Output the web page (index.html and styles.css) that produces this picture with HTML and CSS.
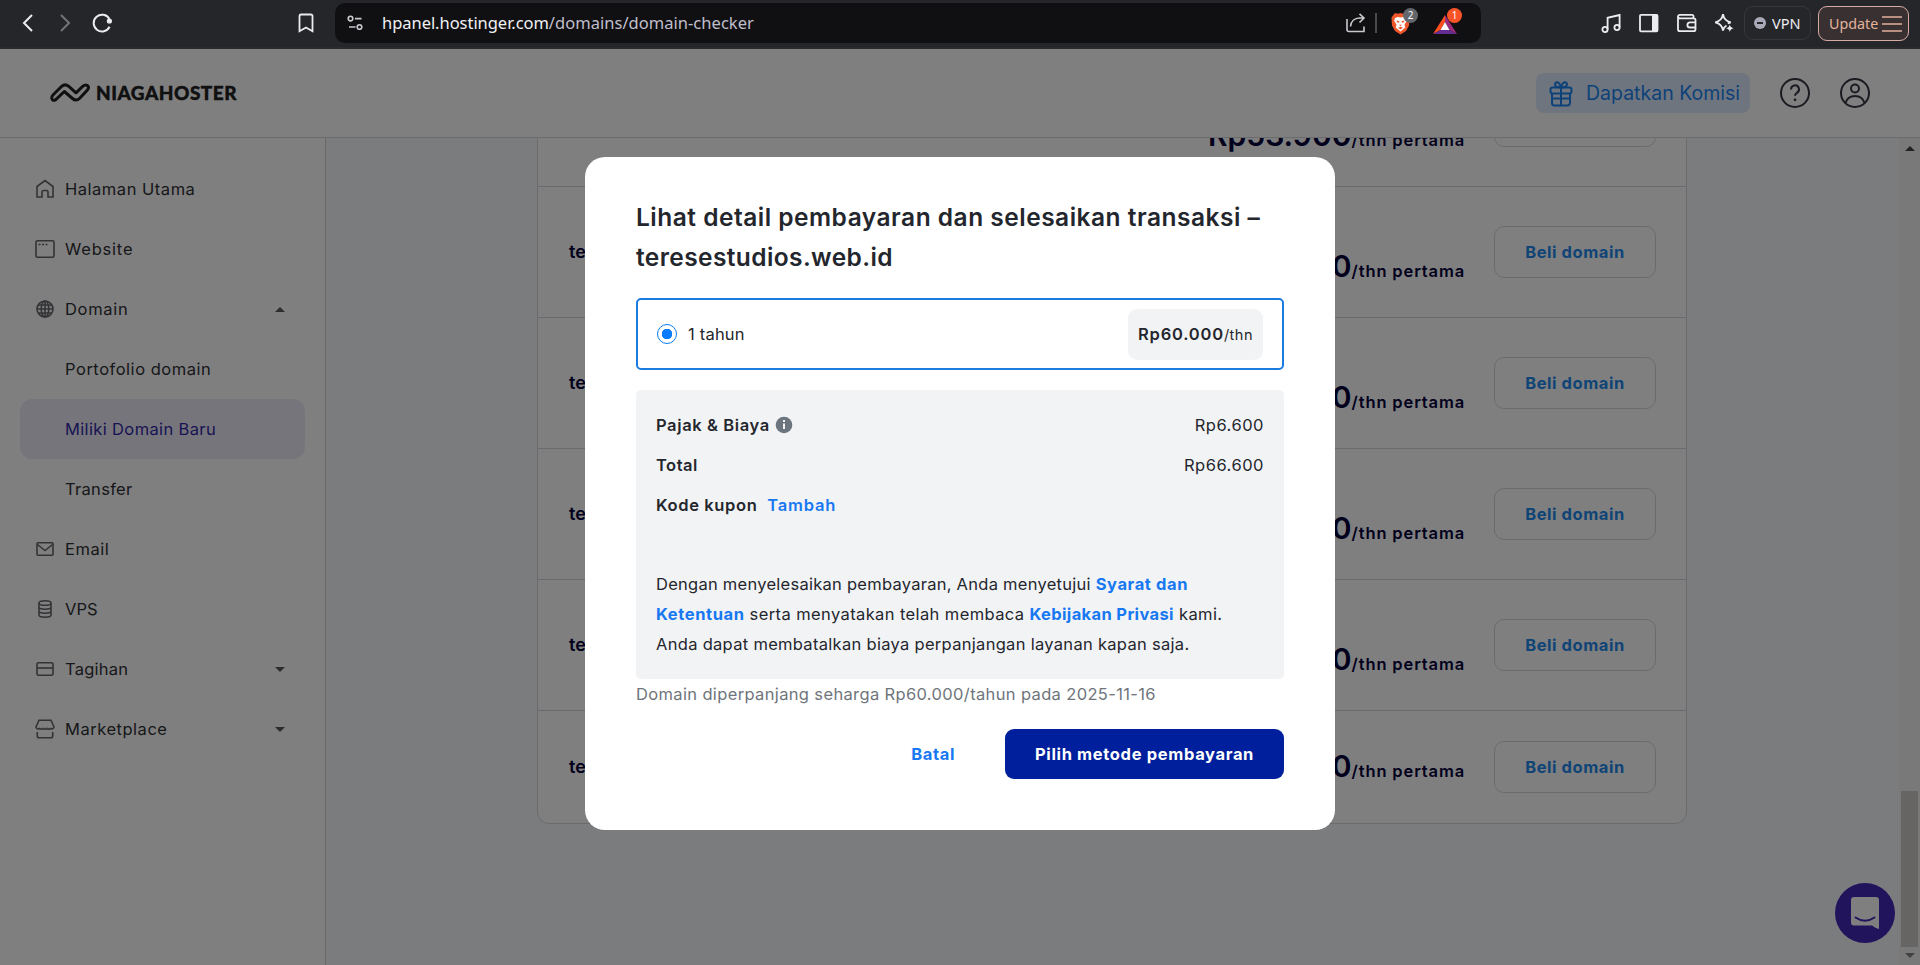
FILE: index.html
```html
<!DOCTYPE html>
<html lang="id">
<head>
<meta charset="utf-8">
<title>Niagahoster - Domain checker</title>
<link rel="stylesheet" href="styles.css">
</head>
<body>
<div class="toolbar">
  <svg class="tb-back" width="20" height="24" viewBox="0 0 20 24"><path d="M14 4 6 12l8 8"/></svg>
  <svg class="tb-forward" width="20" height="24" viewBox="0 0 20 24"><path d="m6 4 8 8-8 8"/></svg>
  <svg class="tb-reload" width="24" height="24" viewBox="0 0 24 24"><path d="M19.6 15.8A8.4 8.4 0 1 1 19.4 8"/><circle class="solid" cx="19.4" cy="10" r="2.6"/></svg>
  <svg class="tb-bookmark" width="18" height="24" viewBox="0 0 18 24"><path d="M2.5 20.300V5a1.500 1.500 0 0 1 1.500-1.500h10A1.500 1.500 0 0 1 15.500 5v15.300L9 16.500z"/></svg>
  <div class="address">
    <svg class="tb-tune" width="18" height="18" viewBox="0 0 18 18"><circle cx="4.500" cy="4.600" r="2.300"/><path d="M9 4.600h6.500M3 13h6.500"/><circle cx="13.500" cy="13" r="2.300"/></svg>
    <div class="url"><span class="url-host">hpanel.hostinger.com</span><span class="url-path">/domains/domain-checker</span></div>
    <svg class="tb-share" width="22" height="22" viewBox="0 0 22 22"><path d="M2 7v10.500a2 2 0 0 0 2 2h15v-5M5.500 14.500c.5-5 4-8.500 9-8.500h4.500M14.500 1.800 19 6l-4.500 4.500"/></svg>
    <span class="divider"></span>
    <div class="shield">
      <svg width="21" height="23" viewBox="0 0 21 23"><path fill="#f1562b" d="m5 1 3 .8L10.500 1l2.500.8L16 1l2 2.500 1.500 2-.5 8-3 5.500-5.500 3.500L5 19l-3-5.500-.5-8 1.500-2z"/><path fill="#fff" d="m5 6 3-1 2.500.6L13 5l3 1 .8 3-2.300 3.500.8 3-4.800 4-4.800-4 .8-3L4.200 9z"/><path fill="#f1562b" d="m6.500 8.500 3 .8-.5 1.500-2-.5zM14.500 8.500l-3 .8.5 1.500 2-.5zM9 12.800h3l-1.500 1.400zM8 15.800l2.500-1 2.500 1-2.500 1.700z"/></svg>
      <span class="badge badge-gray">2</span>
    </div>
    <div class="rewards">
      <svg width="24" height="20" viewBox="0 0 24 20"><path fill="#ff4f1f" d="M12 0v7L7.500 15 0 19z"/><path fill="#9e2a7c" d="M12 0v7l4.500 8 7.500 4z"/><path fill="#662d91" d="M0 19l7.500-4h9l7.500 4z"/><path fill="#fff" d="m12 7 4.500 8h-9z"/></svg>
      <span class="badge badge-orange">1</span>
    </div>
  </div>
  <svg class="tb-music" width="22" height="22" viewBox="0 0 22 22"><circle cx="5" cy="17.500" r="2.600"/><circle cx="17" cy="15.500" r="2.600"/><path d="M7.600 17.500V5.800l12-2.800v12.500"/></svg>
  <svg class="tb-panel" width="22" height="22" viewBox="0 0 22 22"><rect x="2" y="2.800" width="17.500" height="16.500" rx="1"/><path class="solid" d="M14 2.800h5.500v16.500H14z"/></svg>
  <svg class="tb-wallet" width="22" height="22" viewBox="0 0 22 22"><path d="M17.500 6.300V4A1.500 1.500 0 0 0 16 2.800H4A2 2 0 0 0 2 4.500v12.700a2 2 0 0 0 2 2h13.500a2 2 0 0 0 2-2V8a1.700 1.700 0 0 0-1.700-1.700H4a2 2 0 0 1-2-1.800M19.500 10.300H14a2.600 2.600 0 0 0 0 5.200h5.500"/></svg>
  <svg class="tb-spark" width="22" height="22" viewBox="0 0 22 22"><path d="M13.500 13.500C11.500 14.500 10.500 16 10 18.500c-.8-5-2.800-7.200-7.800-8.200 5-1 7-3.300 7.800-8.200.8 4.900 2.800 7.200 7.800 8.200-1.200.3-2.200.7-3 1.200"/><path class="solid" d="M16.800 12.500q.6 3.200 3.800 3.800-3.200.6-3.800 3.800-.6-3.200-3.800-3.800 3.200-.6 3.800-3.800z"/></svg>
  <div class="vpn"><svg width="12" height="12" viewBox="0 0 12 12"><circle cx="6" cy="6" r="6" fill="#a9a9b8"/><path d="M3 6h6" stroke="#25262a" stroke-width="2"/></svg><span>VPN</span></div>
  <div class="update"><span>Update</span><svg width="20" height="18" viewBox="0 0 20 18"><path d="M0 2h20M0 9h20M0 16h20"/></svg></div>
</div>

<div class="page">
  <header class="header">
    <svg class="logo-mark" width="40" height="20" viewBox="0 0 40 20"><path d="M5.500 16.800Q2.500 18.300 1.800 15.500 1.500 13.500 3.200 11.800L11.500 3.500Q15 .500 18.500 3.200L26 9.800l6.500-6.300q3.500-2.800 5.500-.5 1.300 2-.8 4.300l-7.500 7.900q-3.500 3.500-7.200.3L14.300 8.500z"/></svg>
    <span class="logo-name">NIAGAHOSTER</span>
    <div class="commission">
      <svg width="24" height="27" viewBox="0 0 24 27"><rect x="1.500" y="7.500" width="21" height="6" rx="2"/><path d="M3 13.500V23a2.500 2.500 0 0 0 2.500 2.500h13A2.500 2.500 0 0 0 21 23v-9.500M12 7.500v18M3 18.500h18M12 7.500C8 7.500 6 6 6 4s4-4 6 3.500C14 0 18 2 18 4s-2 3.500-6 3.500z"/></svg>
      <span>Dapatkan Komisi</span>
    </div>
    <svg class="round-icon help" width="32" height="32" viewBox="0 0 32 32"><circle cx="16" cy="16" r="14"/><path d="M12 12.500a4 4 0 1 1 6 3.300c-1.500.9-2 1.400-2 3"/><circle class="dot" cx="16" cy="22.800" r="1.400"/></svg>
    <svg class="round-icon" width="32" height="32" viewBox="0 0 32 32"><circle cx="16" cy="16" r="14"/><circle cx="16" cy="11.500" r="4"/><path d="M6.500 26c1.500-5 5-7 9.500-7s8 2 9.500 7"/></svg>
  </header>

  <div class="body">
    <nav class="sidebar">
      <a class="item"><svg width="20" height="20" viewBox="0 0 20 20"><path d="M2 7.500 10 1.500l8 6V18h-5v-5q0-1.500-1.500-1.500h-3Q7 11.500 7 13v5H2z"/></svg><span class="w-home">Halaman Utama</span></a>
      <a class="item"><svg width="20" height="20" viewBox="0 0 20 20"><rect x="1" y="1.800" width="18" height="16.400" rx="1.500"/><path d="M3.500 5.500h2M7 5.500h2M10.500 5.500h2"/></svg><span class="w-website">Website</span></a>
      <a class="item"><svg width="20" height="20" viewBox="0 0 20 20"><circle cx="10" cy="10" r="8"/><ellipse cx="10" cy="10" rx="3.800" ry="8"/><path d="M10 2v16M2 10h16M3 6h14M3 14h14"/></svg><span class="w-domain">Domain</span><i class="caret up"></i></a>
      <a class="item sub"><span class="w-portfolio">Portofolio domain</span></a>
      <a class="item sub active"><span class="w-new">Miliki Domain Baru</span></a>
      <a class="item sub"><span class="w-transfer">Transfer</span></a>
      <a class="item"><svg width="20" height="20" viewBox="0 0 20 20"><rect x="2" y="3.800" width="16" height="12.500" rx="1"/><path d="m2.500 5.500 7.500 6 7.500-6"/></svg><span class="w-email">Email</span></a>
      <a class="item"><svg width="20" height="20" viewBox="0 0 20 20"><ellipse cx="10" cy="4" rx="6" ry="2.300"/><path d="M4 4v12c0 3 12 3 12 0V4M4 8c0 3 12 3 12 0M4 12c0 3 12 3 12 0"/></svg><span class="w-vps">VPS</span></a>
      <a class="item"><svg width="20" height="20" viewBox="0 0 20 20"><rect x="2" y="3.800" width="16" height="12.500" rx="1.500"/><path d="M2 9h16"/></svg><span class="w-billing">Tagihan</span><i class="caret"></i></a>
      <a class="item"><svg width="20" height="20" viewBox="0 0 20 20"><path d="M4 1.200h12L19 8q-1 3-3.500 1.500-1.300 1.500-2.700 0-1.400 1.500-2.800 0-1.400 1.500-2.800 0-1.400 1.500-2.700 0Q2 11 1 8zM2.300 13v4q0 1.800 1.800 1.800h11.800q1.800 0 1.800-1.800v-4"/></svg><span class="w-market">Marketplace</span><i class="caret"></i></a>
    </nav>
    <main class="content">
      <div class="results">
        <div class="result"><span class="name">teresestudios</span><span class="price"><b>Rp53.900</b>/thn pertama</span><button class="buy">Beli domain</button></div>
        <div class="result"><span class="name">teresestudios</span><span class="price"><b>Rp53.900</b>/thn pertama</span><button class="buy">Beli domain</button></div>
        <div class="result"><span class="name">teresestudios</span><span class="price"><b>Rp53.900</b>/thn pertama</span><button class="buy">Beli domain</button></div>
        <div class="result"><span class="name">teresestudios</span><span class="price"><b>Rp53.900</b>/thn pertama</span><button class="buy">Beli domain</button></div>
        <div class="result"><span class="name">teresestudios</span><span class="price"><b>Rp53.900</b>/thn pertama</span><button class="buy">Beli domain</button></div>
        <div class="result short"><span class="name">teresestudios</span><span class="price"><b>Rp53.900</b>/thn pertama</span><button class="buy">Beli domain</button></div>
      </div>
    </main>
    <div class="scrollbar"><i class="sb-arrow sb-up"></i><i class="sb-thumb"></i><i class="sb-arrow sb-down"></i></div>
  </div>

  <div class="chat"><svg width="30" height="34" viewBox="0 0 30 34"><path fill="#fff" d="M3 1h23a3 3 0 0 1 3 3v29q-4-1-7-3.500H4a3 3 0 0 1-3-3V4a3 3 0 0 1 3-3z"/><path d="M5.500 21.500q9.500 6.500 19 0" fill="none" stroke="#4526ba" stroke-width="2" stroke-linecap="round"/></svg></div>

  <div class="overlay">
    <section class="modal">
      <h2 class="title"><span>Lihat detail pembayaran dan selesaikan transaksi –</span><br><span class="title-domain">teresestudios.web.id</span></h2>
      <div class="option">
        <span class="radio"></span><span class="period">1 tahun</span>
        <span class="chip"><b>Rp60.000</b><small>/thn</small></span>
      </div>
      <div class="summary">
        <div class="line"><b class="w-tax">Pajak &amp; Biaya</b><svg width="18" height="18" viewBox="0 0 18 18"><circle cx="9" cy="9" r="8.300" fill="#6c757e"/><path fill="#f2f3f5" d="M8 4h2v2H8zM8 7.500h2V13H8z"/></svg><span class="amount">Rp6.600</span></div>
        <div class="line"><b class="w-total">Total</b><span class="amount">Rp66.600</span></div>
        <div class="line"><b class="w-coupon">Kode kupon</b><a class="add">Tambah</a></div>
        <p class="terms"><span class="t1">Dengan menyelesaikan pembayaran, Anda menyetujui </span><a class="l1">Syarat dan</a><br><a class="l2">Ketentuan</a><span class="t2"> serta menyatakan telah membaca </span><a class="l3">Kebijakan Privasi</a><span class="t3"> kami.</span><br><span class="t4">Anda dapat membatalkan biaya perpanjangan layanan kapan saja.</span></p>
      </div>
      <p class="note">Domain diperpanjang seharga Rp60.000/tahun pada 2025-11-16</p>
      <div class="actions"><button class="cancel">Batal</button><button class="pay">Pilih metode pembayaran</button></div>
    </section>
  </div>
</div>
</body>
</html>
```
FILE: styles.css
```css
* { box-sizing: border-box; }
body {
  margin: 0;
  width: 1920px;
  height: 965px;
  overflow: hidden;
  display: flex;
  flex-direction: column;
  font: 400 16.5px/30px Inter, sans-serif;
  color: #24262d;
}
svg { display: block; flex: none; }
button { font-family: inherit; padding: 0; background: none; border: 0; }

/* Browser toolbar */
.toolbar {
  flex: none;
  height: 49px;
  padding: 3px 11px 0 18px;
  display: flex;
  align-items: flex-start;
  background: #25262a;
  border-bottom: 2px solid #2b2b2d;
  font-family: "Noto Sans", sans-serif;
}
.toolbar > svg { margin-top: 9px; fill: none; stroke: #ececf0; stroke-width: 1.800; }
.toolbar .solid { fill: #ececf0; stroke: none; }
.toolbar > .tb-back { margin-top: 8px; stroke-width: 2; }
.toolbar > .tb-forward { margin: 8px 0 0 17px; stroke: #737478; stroke-width: 2; }
.toolbar > .tb-reload { margin: 8px 0 0 15px; stroke-width: 2; }
.toolbar > .tb-bookmark { margin: 8px 0 0 183px; }
.address {
  width: 1146px;
  height: 40px;
  margin-left: 20px;
  padding-left: 11px;
  display: flex;
  align-items: center;
  border-radius: 10px;
  background: #101012;
}
.tb-tune, .tb-share { fill: none; stroke: #c9c9ce; stroke-width: 1.600; }
.url { width: 963px; margin-left: 18px; line-height: 38px; white-space: nowrap; color: #c0bfcc; }
.url-host { color: #f1f1f5; letter-spacing: -.04px; }
.url-path { letter-spacing: .03px; }
.divider { width: 2px; height: 20px; margin: 0 13px 0 8px; background: #4b4b4e; }
.shield, .rewards { position: relative; }
.shield { margin-top: 1px; }
.rewards { margin: 3px 0 0 22px; }
.badge {
  position: absolute;
  height: 15px;
  width: 15px;
  border-radius: 8px;
  color: #fff;
  font-size: 10px;
  line-height: 15px;
  text-align: center;
}
.badge-gray { left: 13px; top: -4px; background: #63666b; }
.badge-orange { left: 14px; top: -7px; background: #fb5328; }
.toolbar > .tb-music { margin-left: 119px; }
.toolbar > .tb-panel, .toolbar > .tb-wallet, .toolbar > .tb-spark { margin-left: 16px; }
.toolbar > .tb-spark { margin-left: 15px; }
.vpn {
  width: 67px;
  height: 34px;
  margin: 3px 0 0 9px;
  padding-left: 9px;
  display: flex;
  align-items: center;
  gap: 6px;
  border: 1px solid #36373b;
  border-radius: 9px;
  color: #ededf2;
  font-size: 14.500px;
}
.update {
  width: 91px;
  height: 35px;
  margin: 3px 0 0 7px;
  padding-left: 10px;
  display: flex;
  align-items: center;
  gap: 4px;
  border: 1.500px solid #d7aaa4;
  border-radius: 9px;
  background: #393032;
  color: #e3b39c;
  font-size: 14.300px;
}
.update svg { stroke: #dfae9a; stroke-width: 1.600; }

/* Page shell */
.page { position: relative; flex: 1; display: flex; flex-direction: column; min-height: 0; background: #fff; }
.header {
  flex: none;
  height: 89px;
  padding: 0 49px 0 50px;
  display: flex;
  align-items: center;
  border-bottom: 1px solid #d4d6da;
}
.logo-mark { fill: none; stroke: #202023; stroke-width: 3; stroke-linejoin: round; stroke-linecap: round; }
.logo-name { margin-left: 6px; font: 900 19px/24px Lato, sans-serif; letter-spacing: .5px; color: #202023; -webkit-text-stroke: .4px #202023; }
.commission {
  width: 214px;
  height: 40px;
  margin: 0 29px 0 auto;
  padding-left: 13px;
  display: flex;
  align-items: center;
  gap: 13px;
  border-radius: 8px;
  background: #dceaff;
  color: #1b84f0;
  font-size: 19.500px;
  white-space: nowrap;
}
.commission svg { fill: none; stroke: #1b84f0; stroke-width: 2; }
.round-icon { fill: none; stroke: #363644; stroke-width: 2; }
.round-icon .dot { fill: #363644; stroke: none; }
.help { margin-right: 28px; }
.body { flex: 1; min-height: 0; display: flex; }

/* Sidebar */
.sidebar { width: 326px; flex: none; padding: 21px 20px 0; border-right: 1px solid #cdd1d5; }
.item { height: 60px; padding: 0 20px 0 15px; display: flex; align-items: center; color: #2f3035; border-radius: 12px; }
.item svg { margin-right: 10px; fill: none; stroke: #66676d; stroke-width: 1.600; }
.item.sub { padding-left: 45px; }
.item.active { background: #edebf8; color: #3229a6; }
.caret { margin-left: auto; border: 5px solid transparent; border-top: 5px solid #5a5b5f; border-bottom: 0; }
.caret.up { border-top: 0; border-bottom: 5px solid #5a5b5f; }
.w-home { letter-spacing: .52px; }
.w-website { letter-spacing: .8px; }
.w-domain { letter-spacing: .7px; }
.w-portfolio { letter-spacing: .52px; }
.w-new { letter-spacing: .36px; }
.w-transfer { letter-spacing: .3px; }
.w-email { letter-spacing: .55px; }
.w-vps { letter-spacing: 0; }
.w-billing { letter-spacing: .25px; }
.w-market { letter-spacing: .52px; }

/* Domain results */
.content {
  flex: 1;
  min-width: 0;
  padding: 0 0 141px 211px;
  display: flex;
  flex-direction: column;
  justify-content: flex-end;
  overflow: hidden;
  background: #f7f9fb;
}
.results { width: 1150px; flex: none; background: #fff; border: 1px solid #d5d7dc; border-radius: 12px; }
.result { height: 131px; padding: 0 30px 0 31px; display: flex; align-items: center; border-bottom: 1px solid #d5d7dc; color: #03003a; font-weight: 600; }
.result.short { height: 112px; border-bottom: 0; }
.name { font-size: 18px; }
.price { margin: 33px 29px 0 auto; line-height: 36px; letter-spacing: .86px; white-space: nowrap; }
.price b { font-size: 30px; font-weight: 600; letter-spacing: 0; }
.short .price { margin-top: 2px; }
.buy {
  width: 162px;
  height: 52px;
  border: 1px solid #d5d7dc;
  border-radius: 10px;
  color: #2189ee;
  font-size: 16.500px;
  font-weight: 700;
  letter-spacing: .54px;
}

/* Scrollbar */
.scrollbar { width: 21px; flex: none; padding: 8px 0 7px; display: flex; flex-direction: column; align-items: center; background: #f3f3f2; }
.sb-arrow { border: 5px solid transparent; }
.sb-up { border-top: 0; border-bottom: 5px solid #444; }
.sb-down { margin-top: 6px; border-bottom: 0; border-top: 5px solid #858585; }
.sb-thumb { width: 17px; height: 156px; margin-top: auto; background: #cfcac7; }

.chat {
  position: absolute;
  right: 25px;
  bottom: 22px;
  width: 60px;
  height: 60px;
  display: grid;
  place-items: center;
  border-radius: 50%;
  background: #4526ba;
}

/* Payment dialog */
.overlay { position: absolute; inset: 0; padding: 108px 585px 0; background: rgba(0, 0, 0, .5); }
.modal { height: 673px; padding: 40px 51px 0; border-radius: 20px; background: #fff; }
.title { margin: 0 0 21px; font-size: 24.500px; line-height: 40px; font-weight: 600; letter-spacing: .5px; white-space: nowrap; }
.title-domain { letter-spacing: .4px; }
.option { height: 72px; padding: 0 19px 0 19px; display: flex; align-items: center; border: 2px solid #1a7be0; border-radius: 5px; }
.radio { width: 20px; height: 20px; border: 1px solid #0d7df0; border-radius: 50%; background: radial-gradient(circle, #0a7cff 5px, transparent 5.500px); }
.period { margin-left: 11px; letter-spacing: .2px; }
.chip { height: 51px; width: 135px; margin-left: auto; display: flex; align-items: baseline; justify-content: center; border-radius: 9px; background: #f2f3f5; line-height: 51px; }
.chip b { font-weight: 600; letter-spacing: .8px; }
.chip small { font-size: 14.500px; letter-spacing: .5px; }
.summary { height: 289px; margin-top: 20px; padding: 15px 20px 0; border-radius: 5px; background: #f2f3f5; }
.line { height: 40px; display: flex; align-items: center; }
.line b { font-weight: 600; letter-spacing: .62px; }
.line .w-total { letter-spacing: .5px; }
.line svg { margin-left: 5px; }
.amount { margin-left: auto; letter-spacing: .5px; }
.add { margin-left: 10px; font-weight: 600; color: #1778f2; letter-spacing: .8px; }
.terms { margin: 44px 0 0; white-space: nowrap; }
.terms a { font-weight: 700; color: #1778f2; letter-spacing: .6px; }
.terms .l3 { letter-spacing: .36px; }
.t1 { letter-spacing: .26px; }
.t2, .t3 { letter-spacing: .39px; }
.t4 { letter-spacing: .3px; }
.note { margin: 0; color: #6f757b; letter-spacing: .355px; }
.actions { margin-top: 20px; display: flex; justify-content: flex-end; align-items: center; }
.actions button { font-size: 16.500px; font-weight: 700; }
.cancel { margin-right: 50px; color: #1778f2; }
.actions .cancel { letter-spacing: .6px; }
.pay { width: 279px; height: 50px; border-radius: 9px; background: #001f9c; color: #fff; }
.actions .pay { letter-spacing: .65px; }
```
